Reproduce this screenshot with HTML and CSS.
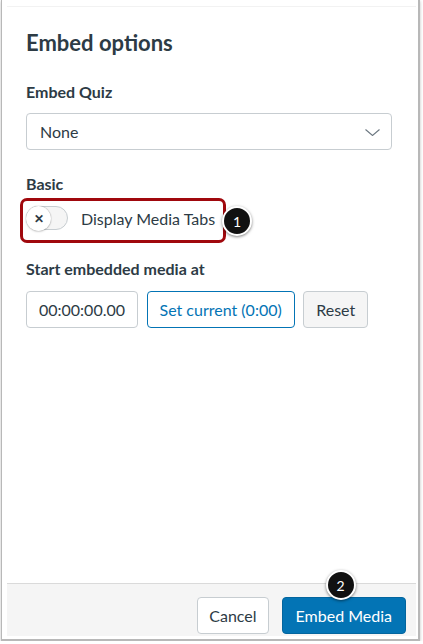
FILE: index.html
```html
<!DOCTYPE html>
<html lang="en">
<head>
  <meta charset="UTF-8">
  <meta name="viewport" content="width=device-width, initial-scale=1.0">
  <title>Embed options</title>
  <link rel="stylesheet" href="styles.css">
</head>
<body>
  <div class="frame">
    <div class="modal">
      <div class="modal-body">
        <h2 class="title">Embed options</h2>

        <label class="label">Embed Quiz</label>
        <div class="select">
          <span>None</span>
          <svg class="chevron" width="15" height="7" viewBox="0 0 15 7">
            <path d="M0.5 0.5 L7.5 6.5 L14.5 0.5" fill="none" stroke="#6b7780" stroke-width="1.1"/>
          </svg>
        </div>

        <label class="label label-basic">Basic</label>
        <div class="toggle-row">
          <span class="toggle">
            <span class="knob">&#x2715;</span>
          </span>
          <span class="toggle-text">Display Media Tabs</span>
          <span class="highlight"></span>
          <span class="badge badge-one">1</span>
        </div>

        <label class="label label-start">Start embedded media at</label>
        <div class="time-row">
          <div class="time-input">00:00:00.00</div>
          <button class="btn btn-outline">Set current (0:00)</button>
          <button class="btn btn-grey">Reset</button>
        </div>
      </div>

      <div class="modal-footer">
        <button class="btn btn-white">Cancel</button>
        <div class="primary-wrap">
          <button class="btn btn-primary">Embed Media</button>
          <span class="badge badge-two">2</span>
        </div>
      </div>
    </div>
  </div>
</body>
</html>
```

FILE: styles.css
```css
body {
  margin: 0;
  background: #fff;
  font-family: Lato, "Liberation Sans", sans-serif;
  color: #2d3b45;
}
.frame {
  margin-left: 1px;
  width: 416px;
  height: 639px;
  border: 1px solid #b8b8b8;
  border-width: 0 2px 2px 1px;
  box-shadow: 0 1px 3px rgba(0, 0, 0, 0.25);
  background: #fff;
}
.modal {
  margin: 0 2px 0 5px;
  padding-top: 6px;
  height: 630px;
  display: flex;
  flex-direction: column;
}
.modal-body {
  flex: 1;
  border-top: 1px solid #f2f2f2;
  padding: 22px 24px 0 19px;
}
.title {
  margin: 0;
  font-size: 22px;
  line-height: 28px;
  font-weight: 700;
}
.label {
  display: block;
  margin-top: 25px;
  font-size: 16px;
  line-height: 20px;
  font-weight: 700;
}
.select {
  margin-top: 11px;
  height: 35px;
  border: 1px solid #c7cdd1;
  border-radius: 4px;
  display: flex;
  align-items: center;
  justify-content: space-between;
  padding: 0 11px 0 13px;
  font-size: 16px;
}
.chevron {
  margin-top: 1px;
}
.label-basic {
  margin-top: 24px;
}
.toggle-row {
  position: relative;
  margin-top: 11px;
  height: 26px;
  display: flex;
  align-items: center;
}
.toggle {
  width: 40px;
  height: 22px;
  border: 1px solid #c7cdd1;
  border-radius: 13px;
  background: #f5f5f5;
  display: flex;
  align-items: center;
}
.knob {
  width: 25px;
  height: 25px;
  margin-left: -1px;
  border-radius: 50%;
  background: #fff;
  box-shadow: 0 0 1px rgba(0, 0, 0, 0.45), 0 1px 2px rgba(0, 0, 0, 0.15);
  display: flex;
  align-items: center;
  justify-content: center;
  font-size: 12px;
  font-weight: 700;
  color: #2d3b45;
}
.toggle-text {
  margin-left: 13px;
  font-size: 16px;
}
.highlight {
  position: absolute;
  left: -6px;
  top: -7px;
  width: 200px;
  height: 39px;
  border: 3px solid #a0080d;
  border-radius: 7px;
}
.badge {
  position: absolute;
  width: 26px;
  height: 26px;
  border-radius: 50%;
  background: #111;
  border: 2px solid #fff;
  box-shadow: 0 1px 3px rgba(0, 0, 0, 0.5);
  color: #fff;
  font-size: 14px;
  display: flex;
  align-items: center;
  justify-content: center;
}
.badge-one {
  left: 196px;
  top: 1px;
}
.label-start {
  margin-top: 28px;
}
.time-row {
  margin-top: 12px;
  display: flex;
  gap: 8.5px;
}
.time-input,
.btn {
  height: 37px;
  box-sizing: border-box;
  border: 1px solid #c7cdd1;
  border-radius: 4px;
  padding: 0 12px;
  font-family: inherit;
  font-size: 16px;
  display: flex;
  align-items: center;
}
.time-input {
  color: #2d3b45;
}
.btn-outline {
  background: #fff;
  border-color: #0374b5;
  color: #0374b5;
}
.btn-grey {
  background: #f5f5f5;
  color: #2d3b45;
}
.modal-footer {
  border-top: 1px solid #dadada;
  background: #f5f5f5;
  padding: 13px 10px 2px;
  display: flex;
  justify-content: flex-end;
  gap: 13px;
}
.btn-white {
  background: #fff;
  color: #2d3b45;
  padding: 0 11px;
}
.primary-wrap {
  position: relative;
}
.btn-primary {
  background: #0374b5;
  border-color: #03659e;
  color: #fff;
  padding: 0 13px;
}
.badge-two {
  left: 44px;
  top: -27px;
}
```
